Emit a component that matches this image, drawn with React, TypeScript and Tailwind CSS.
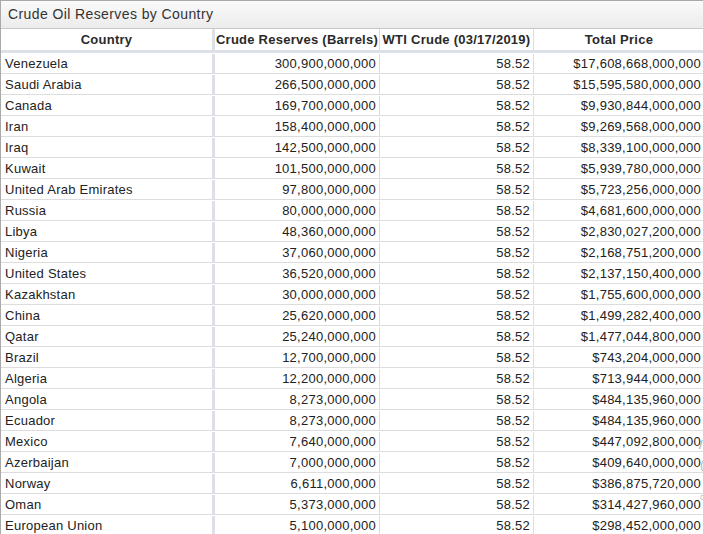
const rows: [string, string, string][] = [
  ["Venezuela", "300,900,000,000", "$17,608,668,000,000"],
  ["Saudi Arabia", "266,500,000,000", "$15,595,580,000,000"],
  ["Canada", "169,700,000,000", "$9,930,844,000,000"],
  ["Iran", "158,400,000,000", "$9,269,568,000,000"],
  ["Iraq", "142,500,000,000", "$8,339,100,000,000"],
  ["Kuwait", "101,500,000,000", "$5,939,780,000,000"],
  ["United Arab Emirates", "97,800,000,000", "$5,723,256,000,000"],
  ["Russia", "80,000,000,000", "$4,681,600,000,000"],
  ["Libya", "48,360,000,000", "$2,830,027,200,000"],
  ["Nigeria", "37,060,000,000", "$2,168,751,200,000"],
  ["United States", "36,520,000,000", "$2,137,150,400,000"],
  ["Kazakhstan", "30,000,000,000", "$1,755,600,000,000"],
  ["China", "25,620,000,000", "$1,499,282,400,000"],
  ["Qatar", "25,240,000,000", "$1,477,044,800,000"],
  ["Brazil", "12,700,000,000", "$743,204,000,000"],
  ["Algeria", "12,200,000,000", "$713,944,000,000"],
  ["Angola", "8,273,000,000", "$484,135,960,000"],
  ["Ecuador", "8,273,000,000", "$484,135,960,000"],
  ["Mexico", "7,640,000,000", "$447,092,800,000"],
  ["Azerbaijan", "7,000,000,000", "$409,640,000,000"],
  ["Norway", "6,611,000,000", "$386,875,720,000"],
  ["Oman", "5,373,000,000", "$314,427,960,000"],
  ["European Union", "5,100,000,000", "$298,452,000,000"],
]

// fixed column widths, the country column carries the thick divider
const COLS = "grid grid-cols-[214px_165px_154px_170px]"

export default function App() {
  return (
    <div className="relative h-[534px] w-[703px] overflow-hidden border-l border-t border-[#a9a9a9] bg-white font-['Liberation_Sans',Arial,sans-serif] text-[13px] tracking-[0.25px] text-[#222]">
      <div className="flex h-[28px] items-center border-b border-[#c8c8c8] bg-gradient-to-b from-[#fafafa] to-[#ececec] pl-[7px] text-[14px] tracking-[0.4px] text-[#333]">
        Crude Oil Reserves by Country
      </div>

      <div className={`${COLS} h-[24px] border-b-[3px] border-[#dde0e8] font-bold text-[#2a2a2a]`}>
        <div className="flex items-center justify-center border-r-[3px] border-[#dde0e8]">Country</div>
        <div className="flex items-center justify-center border-r border-[#dddddd]">Crude Reserves (Barrels)</div>
        <div className="flex items-center justify-center border-r border-[#dddddd]">WTI Crude (03/17/2019)</div>
        <div className="flex items-center justify-center">Total Price</div>
      </div>

      {rows.map(([country, barrels, total]) => (
        <div key={country} className={`${COLS} h-[21px] border-b border-[#dddddd] pt-[1px]`}>
          <div className="flex items-center border-r-[3px] border-[#dde0e8] pl-[4px]">{country}</div>
          <div className="flex items-center justify-end border-r border-[#dddddd] pr-[3px]">{barrels}</div>
          <div className="flex items-center justify-end border-r border-[#dddddd] pr-[3px]">58.52</div>
          <div className="flex items-center justify-end pr-[3px]">{total}</div>
        </div>
      ))}

      <span className="absolute left-[698px] top-[437px] text-[13px] leading-none text-[#aaa]">/</span>
      <span className="absolute left-[699px] top-[457px] text-[13px] leading-none text-[#bbb]">(</span>
      <span className="absolute left-[699px] top-[492px] text-[9px] leading-none text-[#bbb]">c</span>
    </div>
  )
}
